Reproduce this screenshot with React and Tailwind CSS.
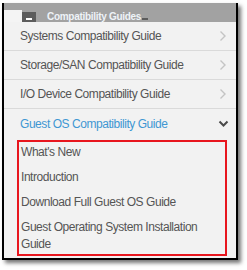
import React from "react";

const items = [
  { label: "Systems Compatibility Guide" },
  { label: "Storage/SAN Compatibility Guide" },
  { label: "I/O Device Compatibility Guide" },
];

const subItems = [
  "What's New",
  "Introduction",
  "Download Full Guest OS Guide",
  "Guest Operating System Installation Guide",
];

const ChevronRight = () => (
  <svg width="8" height="12" viewBox="0 0 8 12" className="shrink-0">
    <polyline points="1.5,1.5 6,6 1.5,10.5" fill="none" stroke="#c4c4c4" strokeWidth="1.4" />
  </svg>
);

const ChevronDown = () => (
  <svg width="11" height="8" viewBox="0 0 11 8" className="shrink-0">
    <polyline points="1.5,1.5 5.5,5.5 9.5,1.5" fill="none" stroke="#4a4a4a" strokeWidth="2" />
  </svg>
);

export default function App() {
  return (
    <div className="w-[247px] h-[270px] bg-white pt-[3px] pl-[2px] font-['Liberation_Sans',Arial,sans-serif]">
      <div className="w-[236px] h-[257px] border-x-2 border-b-2 border-black bg-[#f2f2f2] shadow-[3px_3px_4px_rgba(0,0,0,0.55)] overflow-hidden">
        {/* Header bar */}
        <div className="h-[19px] bg-[#a2a2a2] flex items-end">
          <div className="w-[18px] h-[12px] bg-[#f4f4f4]" />
          <div className="w-[14px] h-[10px] bg-[#5c5c5c] flex items-end justify-center pb-[2px]">
            <div className="w-[6px] h-[2px] bg-white" />
          </div>
          <div className="ml-[11px] h-[10px] flex items-center text-[10px] font-bold tracking-[-0.3px] text-[#eef3f8] leading-none">
            Compatibility Guides
            <span className="ml-[1px] mt-[3px] w-[6px] h-[2px] bg-[#5c5c5c]" />
          </div>
        </div>

        {/* Menu */}
        {items.map((item) => (
          <div
            key={item.label}
            className="h-[29px] flex items-center justify-between pl-[16px] pr-[9px] border-b border-[#dadada] text-[12px] tracking-[-0.45px] text-[#555]"
          >
            <span>{item.label}</span>
            <ChevronRight />
          </div>
        ))}
        <div className="h-[30px] flex items-center justify-between pl-[16px] pr-[7px] text-[12px] tracking-[-0.45px] text-[#3f97d3]">
          <span>Guest OS Compatibility Guide</span>
          <ChevronDown />
        </div>

        {/* Sub menu */}
        <div className="ml-[13px] mt-[1px] w-[210px] border-2 border-[#e8161e] pt-[2px] pl-[2px] pb-[1px] flex flex-col gap-[8px] text-[12px] tracking-[-0.45px] leading-[17px] text-[#555]">
          {subItems.map((s) => (
            <div key={s}>{s}</div>
          ))}
        </div>
      </div>
    </div>
  );
}
